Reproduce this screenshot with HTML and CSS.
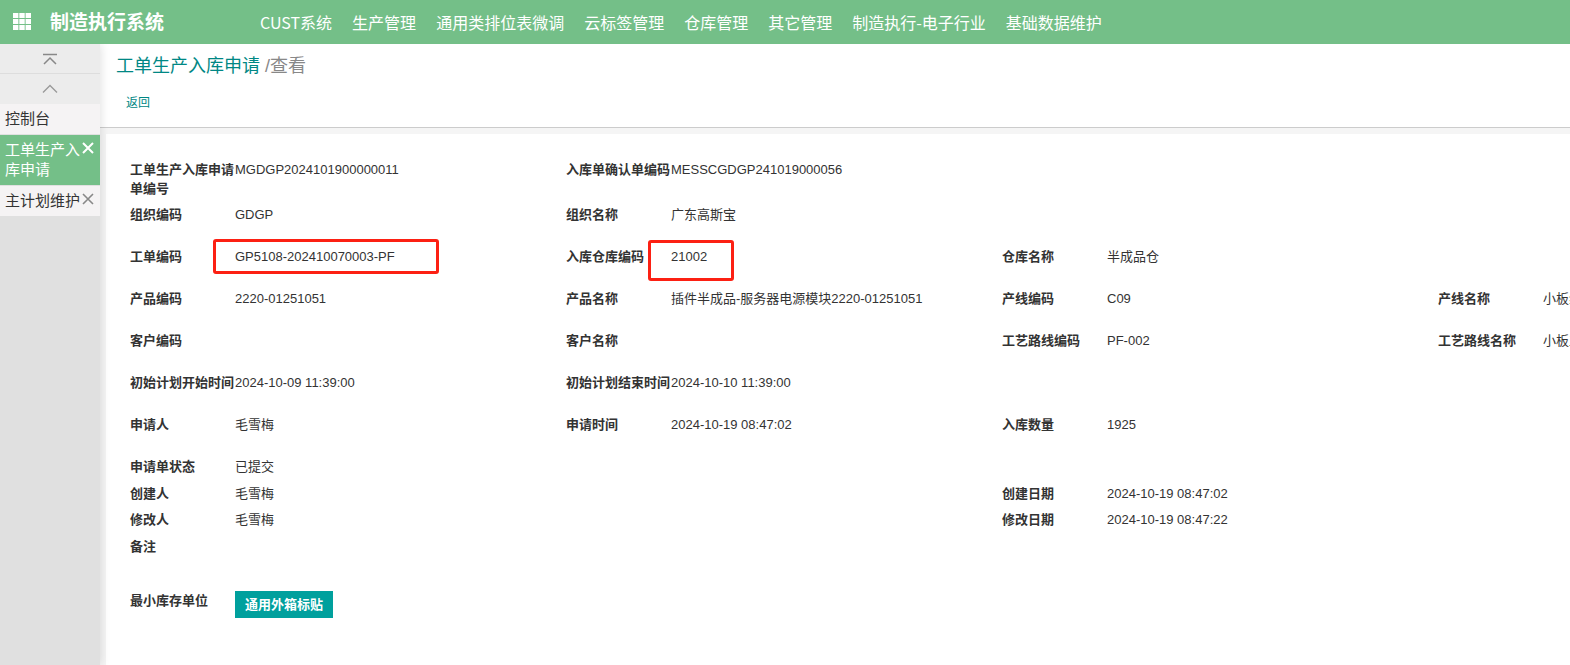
FILE: index.html
```html
<!DOCTYPE html>
<html lang="zh-CN">
<head>
<meta charset="utf-8">
<title>制造执行系统</title>
<link rel="stylesheet" href="styles.css">
</head>
<body>
<header class="topbar">
  <button class="apps" type="button" aria-label="应用">
    <svg width="18" height="17" viewBox="0 0 18 17" fill="#fff"><path d="M0 0h5.400v5H0zM6.300 0h5.400v5H6.300zM12.600 0H18v5h-5.400zM0 6h5.400v5H0zM6.300 6h5.400v5H6.300zM12.600 6H18v5h-5.400zM0 12h5.400v5H0zM6.300 12h5.400v5H6.300zM12.600 12H18v5h-5.400z"/></svg>
  </button>
  <div class="brand">制造执行系统</div>
  <nav class="menu">
    <a href="#">CUST系统</a><a href="#">生产管理</a><a href="#">通用类排位表微调</a><a href="#">云标签管理</a><a href="#">仓库管理</a><a href="#">其它管理</a><a href="#">制造执行-电子行业</a><a href="#">基础数据维护</a>
  </nav>
</header>
<div class="layout">
  <aside class="tabs">
    <button class="scroll" type="button" aria-label="回到顶部"><svg width="14" height="12" viewBox="0 0 14 12" fill="none" stroke="#888" stroke-width="1.500"><path d="M0 1.500h14M1 11l6-6 6 6"/></svg></button>
    <button class="scroll" type="button" aria-label="向上"><svg width="16" height="10" viewBox="0 0 16 10" fill="none" stroke="#999" stroke-width="1.300"><path d="M1 8.500l7-7 7 7"/></svg></button>
    <div class="tab"><a href="#">控制台</a></div>
    <div class="tab active"><a href="#">工单生产入库申请</a><button class="close" type="button" aria-label="关闭"><svg width="12" height="12" viewBox="0 0 12 12" fill="none" stroke="currentColor" stroke-width="2"><path d="M1 1l10 10M11 1L1 11"/></svg></button></div>
    <div class="tab"><a href="#">主计划维护</a><button class="close" type="button" aria-label="关闭"><svg width="12" height="12" viewBox="0 0 12 12" fill="none" stroke="currentColor" stroke-width="1.600"><path d="M1 1l10 10M11 1L1 11"/></svg></button></div>
  </aside>
  <main class="main">
    <div class="control">
      <h1 class="crumbs"><a href="#">工单生产入库申请</a> <span>/查看</span></h1>
      <a class="back" href="#">返回</a>
    </div>
    <section class="sheet">
      <dl class="row wrap">
        <div class="field"><dt>工单生产入库申请单编号</dt><dd>MGDGP2024101900000011</dd></div>
        <div class="field"><dt>入库单确认单编码</dt><dd>MESSCGDGP241019000056</dd></div>
      </dl>
      <dl class="row">
        <div class="field"><dt>组织编码</dt><dd>GDGP</dd></div>
        <div class="field"><dt>组织名称</dt><dd>广东高斯宝</dd></div>
      </dl>
      <dl class="row">
        <div class="field"><dt>工单编码</dt><dd>GP5108-202410070003-PF<i class="mark order"></i></dd></div>
        <div class="field"><dt>入库仓库编码</dt><dd>21002<i class="mark depot"></i></dd></div>
        <div class="field"><dt>仓库名称</dt><dd>半成品仓</dd></div>
      </dl>
      <dl class="row">
        <div class="field"><dt>产品编码</dt><dd>2220-01251051</dd></div>
        <div class="field"><dt>产品名称</dt><dd>插件半成品-服务器电源模块2220-01251051</dd></div>
        <div class="field"><dt>产线编码</dt><dd>C09</dd></div>
        <div class="field"><dt>产线名称</dt><dd>小板线</dd></div>
      </dl>
      <dl class="row">
        <div class="field"><dt>客户编码</dt><dd></dd></div>
        <div class="field"><dt>客户名称</dt><dd></dd></div>
        <div class="field"><dt>工艺路线编码</dt><dd>PF-002</dd></div>
        <div class="field"><dt>工艺路线名称</dt><dd>小板工</dd></div>
      </dl>
      <dl class="row">
        <div class="field"><dt>初始计划开始时间</dt><dd>2024-10-09 11:39:00</dd></div>
        <div class="field"><dt>初始计划结束时间</dt><dd>2024-10-10 11:39:00</dd></div>
      </dl>
      <dl class="row">
        <div class="field"><dt>申请人</dt><dd>毛雪梅</dd></div>
        <div class="field"><dt>申请时间</dt><dd>2024-10-19 08:47:02</dd></div>
        <div class="field"><dt>入库数量</dt><dd>1925</dd></div>
      </dl>
      <dl class="row tight">
        <div class="field"><dt>申请单状态</dt><dd>已提交</dd></div>
      </dl>
      <dl class="row wrap">
        <div class="field"><dt>创建人</dt><dd>毛雪梅</dd></div>
        <div class="field third"><dt>创建日期</dt><dd>2024-10-19 08:47:02</dd></div>
      </dl>
      <dl class="row tight">
        <div class="field"><dt>修改人</dt><dd>毛雪梅</dd></div>
        <div class="field third"><dt>修改日期</dt><dd>2024-10-19 08:47:22</dd></div>
      </dl>
      <dl class="row remark">
        <div class="field"><dt>备注</dt><dd></dd></div>
      </dl>
      <dl class="row">
        <div class="field"><dt>最小库存单位</dt><dd><button class="primary" type="button">通用外箱标贴</button></dd></div>
      </dl>
    </section>
  </main>
</div>
</body>
</html>
```
FILE: styles.css
```css
* { box-sizing: border-box; }
body {
  margin: 0;
  min-height: 100vh;
  display: flex;
  flex-direction: column;
  overflow: hidden;
  font: 13px/19px "Liberation Sans", "Noto Sans CJK SC", sans-serif;
  color: #333;
  background: #fff;
}
a { color: inherit; text-decoration: none; }
button { margin: 0; padding: 0; border: 0; background: none; font: inherit; color: inherit; }
svg { display: block; }

.topbar {
  display: flex;
  align-items: center;
  height: 44px;
  padding-left: 13px;
  background: #74bf88;
  color: #fff;
}
.apps { width: 37px; padding-bottom: 2px; }
.brand { width: 210px; padding-top: 2px; font-size: 19px; line-height: 42px; font-weight: 700; }
.menu {
  display: flex;
  gap: 20px;
  white-space: nowrap;
  font: 16px/44px "Noto Sans CJK SC", sans-serif;
}

.layout { flex: 1; display: flex; }
.tabs {
  position: relative;
  flex: none;
  width: 100px;
  background: #e0e0e0;
  box-shadow: 0 0 10px rgba(0, 0, 0, 0.14);
  clip-path: inset(0 -16px 0 0);
  font-size: 15px;
  line-height: 20px;
}
.scroll {
  display: flex;
  align-items: center;
  justify-content: center;
  width: 100%;
  height: 30px;
  background: #ececec;
}
.scroll:first-child { border-bottom: 1px solid #ddd; }
.tab {
  display: flex;
  align-items: flex-start;
  justify-content: space-between;
  margin-bottom: 1px;
  padding: 5px 6px 5px 5px;
  background: #f5f3f4;
}
.tab a { flex: none; width: 75px; }
.close { padding-top: 2px; color: #888; }
.active { background: #74bf88; color: #fff; }
.active .close { color: #fff; }

.main { flex: 1; min-width: 0; display: flex; flex-direction: column; background: #f5f5f5; }
.control {
  height: 84px;
  padding: 8px 16px;
  background: #fff;
  border-bottom: 1px solid #ccc;
}
.crumbs { margin: 0 0 13px; font-size: 18px; line-height: 28px; font-weight: 400; color: #008784; }
.crumbs span { color: #888; }
.back { display: inline-block; padding-left: 10px; font-size: 12px; line-height: 20px; color: #008784; }
.sheet { flex: 1; margin: 6px 0 0 6px; padding: 26px 24px 0; background: #fff; }

.row { display: grid; grid-template-columns: repeat(4, 436px); margin: 0; padding-bottom: 23px; }
.wrap { padding-bottom: 7px; }
.tight { padding-bottom: 8px; }
.remark { padding-bottom: 35px; }
.field { display: grid; grid-template-columns: 105px 1fr; }
.third { grid-column: 3; }
dt { font-weight: 700; }
dd { position: relative; margin: 0; }
.mark { position: absolute; border: 3px solid #fc2013; border-radius: 3px; }
.order { left: -22px; top: -8px; width: 226px; height: 35px; }
.depot { left: -23px; top: -7px; width: 86px; height: 41px; }
.primary { height: 27px; padding: 0 10px; background: #00a09d; color: #fff; font-weight: 700; }
```
